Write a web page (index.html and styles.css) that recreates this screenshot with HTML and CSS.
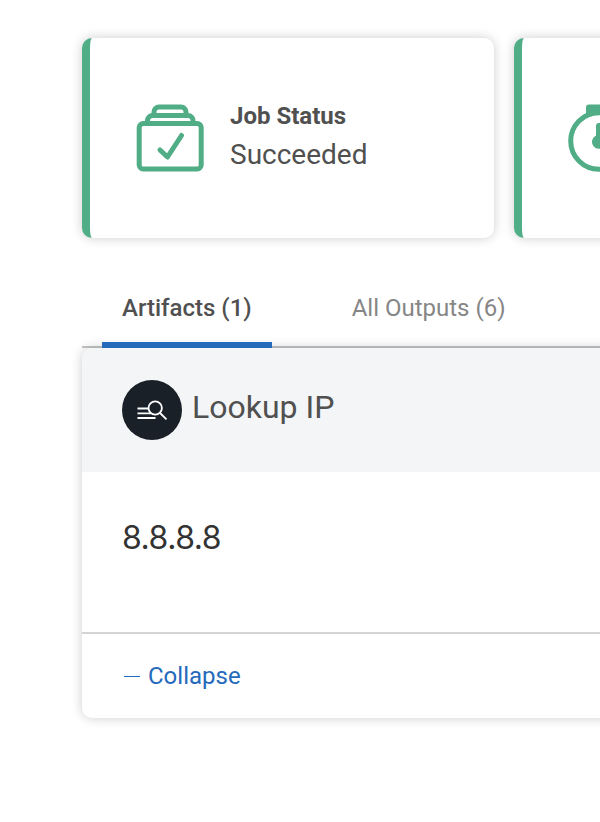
FILE: index.html
```html
<!DOCTYPE html>
<html lang="en">
<head>
<meta charset="utf-8">
<title>Job results</title>
<link rel="stylesheet" href="styles.css">
</head>
<body>
<main class="page">
  <section class="cards">
    <article class="card">
      <svg class="card-icon" viewBox="0 0 68 68" fill="none" stroke="#50ad85" stroke-width="5" stroke-linecap="round" stroke-linejoin="round">
        <rect x="3.2" y="19.500" width="62" height="45.500" rx="4"/>
        <path d="M11.500 18v-1.500a5 5 0 0 1 5-5h35.500a5 5 0 0 1 5 5v1.500M18 10.500V8a5 5 0 0 1 5-5h22a5 5 0 0 1 5 5v2.500"/>
        <path d="M24 46l7.500 7L45.500 31.500"/>
      </svg>
      <div class="card-text">
        <h2 class="card-title">Job Status</h2>
        <p class="card-value">Succeeded</p>
      </div>
    </article>
    <article class="card">
      <svg class="card-icon" viewBox="0 0 68 68">
        <path fill="#50ad85" d="M18 12V3.500a3 3 0 0 1 3-3h21a3 3 0 0 1 3 3v8.500z"/>
        <circle cx="31" cy="37" r="28.300" fill="#fff" stroke="#50ad85" stroke-width="5"/>
        <path fill="#50ad85" d="M28 31.500V22a3 3 0 0 1 6 0v9.500a7 7 0 1 1-6 0z"/>
      </svg>
    </article>
  </section>
  <nav class="tabs">
    <a class="tab tab-active">Artifacts (1)</a>
    <a class="tab">All Outputs (6)</a>
  </nav>
  <section class="panel">
    <header class="panel-head">
      <span class="avatar">
        <svg width="60" height="60" viewBox="0 0 60 60" fill="none" stroke="#fff" stroke-width="1.800">
          <path d="M15.500 28.500h11M15.500 33.400h13.500M15.500 38h18"/>
          <circle cx="33.200" cy="28" r="6.700"/>
          <path d="M38 33l6.500 6.400"/>
        </svg>
      </span>
      <h1 class="panel-title">Lookup IP</h1>
    </header>
    <div class="panel-body">8.8.8.8</div>
    <footer class="panel-foot"><span class="minus"></span>Collapse</footer>
  </section>
</main>
</body>
</html>
```
FILE: styles.css
```css
* { box-sizing: border-box; }
body {
  margin: 0;
  background: #fff;
  color: #505050;
  font-family: Roboto, "Liberation Sans", sans-serif;
}
h1, h2, p { margin: 0; font-weight: 400; }
.page { height: 822px; padding: 38px 0 0 82px; overflow: hidden; }
.cards { display: flex; gap: 20px; }
.card {
  display: flex;
  flex: none;
  align-items: center;
  width: 412px;
  height: 200px;
  padding-left: 46px;
  background: #fff;
  border-left: 8px solid #50ad85;
  border-radius: 10px;
  box-shadow: 0 0 12px rgba(0, 0, 0, .2);
}
.card-icon { flex: none; width: 68px; height: 68px; }
.card-text { margin-left: 26px; padding-bottom: 4px; }
.card-title { font-size: 24px; font-weight: 700; line-height: 36px; padding-bottom: 2px; }
.card-value { font-size: 28px; line-height: 38px; }
.tabs {
  display: flex;
  gap: 60px;
  height: 110px;
  padding: 34px 0 0 20px;
  border-bottom: 2px solid #c3c6c4;
}
.tab {
  height: 76px;
  padding: 0 20px;
  color: #868686;
  font-size: 24px;
  line-height: 72px;
}
.tab-active {
  position: relative;
  z-index: 1;
  color: #505050;
  font-weight: 500;
  border-bottom: 6px solid #256abb;
}
.panel {
  width: 844px;
  height: 370px;
  background: #fff;
  border-radius: 10px;
  box-shadow: 0 0 12px rgba(0, 0, 0, .2);
}
.panel-head {
  display: flex;
  height: 124px;
  padding: 32px 40px;
  background: #f4f5f7;
  border-radius: 10px 10px 0 0;
}
.avatar { width: 60px; height: 60px; border-radius: 50%; background: #1a2028; }
.avatar svg { display: block; }
.panel-title { margin-left: 10px; font-size: 32px; line-height: 54px; }
.panel-body {
  height: 162px;
  padding: 46px 40px;
  border-bottom: 2px solid #d2d4d6;
  color: #333;
  font-family: Inter, Roboto, sans-serif;
  font-size: 32px;
  letter-spacing: -.5px;
  line-height: 40px;
}
.panel-foot {
  display: flex;
  align-items: center;
  height: 84px;
  padding-left: 42px;
  color: #256abb;
  font-size: 24px;
}
.minus { width: 16px; height: 1px; margin-right: 8px; background: #256abb; }
```
